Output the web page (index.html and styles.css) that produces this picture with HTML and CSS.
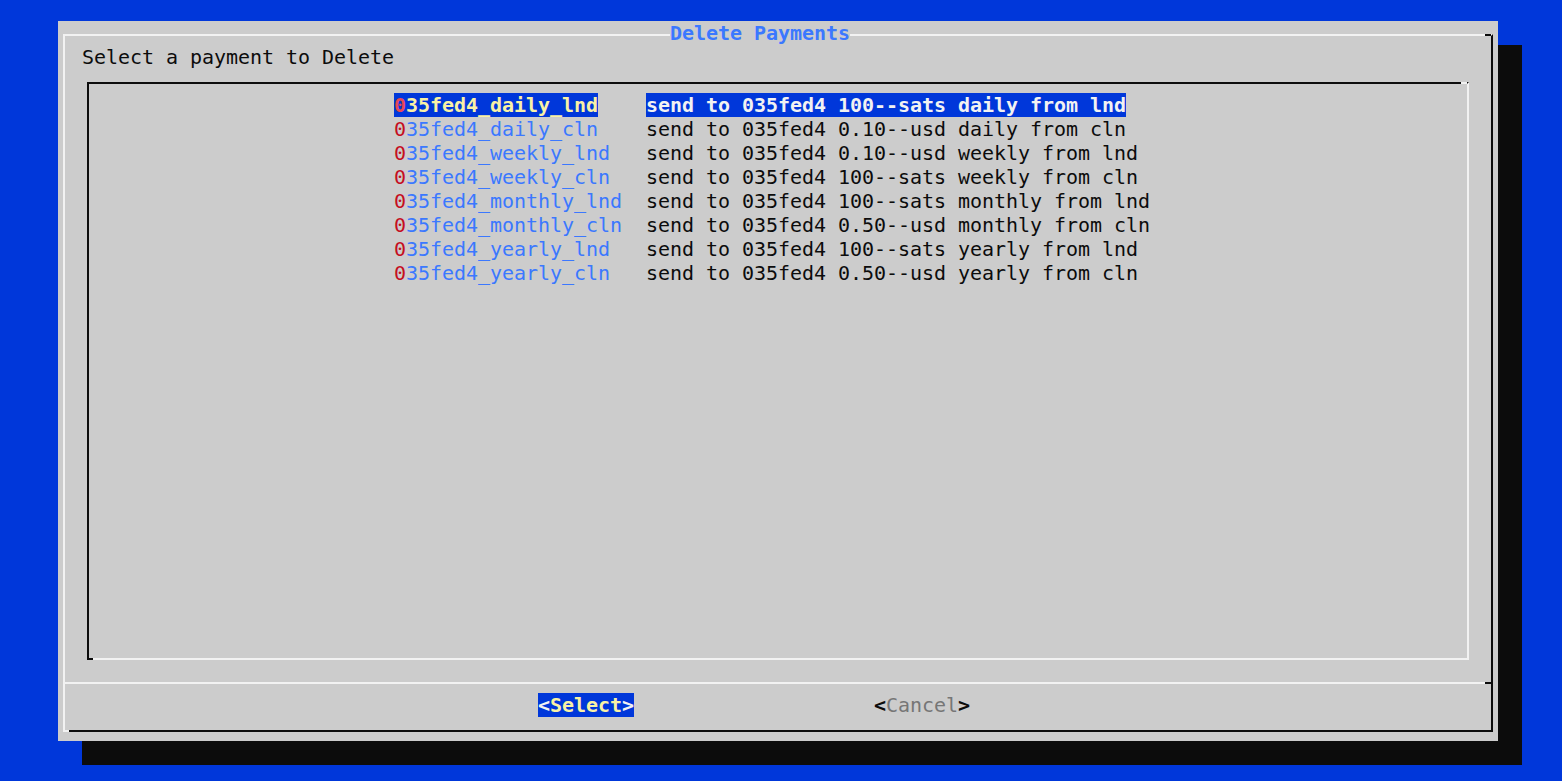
FILE: index.html
```html
<!DOCTYPE html>
<html>
<head>
<meta charset="utf-8">
<title>Delete Payments</title>
<link rel="stylesheet" href="styles.css">
</head>
<body>
<div class="dialog">
  <div class="frame">
    <div class="title">Delete Payments</div>
    <div class="prompt">Select a payment to Delete</div>
    <div class="listbox">
      <div class="row">
        <span class="tagcell"><span class="tag sel"><span class="hk">0</span>35fed4_daily_lnd</span></span>
        <span class="desc sel">send to 035fed4 100--sats daily from lnd</span>
      </div>
      <div class="row">
        <span class="tagcell"><span class="tag"><span class="hk">0</span>35fed4_daily_cln</span></span>
        <span class="desc">send to 035fed4 0.10--usd daily from cln</span>
      </div>
      <div class="row">
        <span class="tagcell"><span class="tag"><span class="hk">0</span>35fed4_weekly_lnd</span></span>
        <span class="desc">send to 035fed4 0.10--usd weekly from lnd</span>
      </div>
      <div class="row">
        <span class="tagcell"><span class="tag"><span class="hk">0</span>35fed4_weekly_cln</span></span>
        <span class="desc">send to 035fed4 100--sats weekly from cln</span>
      </div>
      <div class="row">
        <span class="tagcell"><span class="tag"><span class="hk">0</span>35fed4_monthly_lnd</span></span>
        <span class="desc">send to 035fed4 100--sats monthly from lnd</span>
      </div>
      <div class="row">
        <span class="tagcell"><span class="tag"><span class="hk">0</span>35fed4_monthly_cln</span></span>
        <span class="desc">send to 035fed4 0.50--usd monthly from cln</span>
      </div>
      <div class="row">
        <span class="tagcell"><span class="tag"><span class="hk">0</span>35fed4_yearly_lnd</span></span>
        <span class="desc">send to 035fed4 100--sats yearly from lnd</span>
      </div>
      <div class="row">
        <span class="tagcell"><span class="tag"><span class="hk">0</span>35fed4_yearly_cln</span></span>
        <span class="desc">send to 035fed4 0.50--usd yearly from cln</span>
      </div>
    </div>
    <div class="separator"></div>
    <div class="buttons">
      <span class="btn active"><span class="br">&lt;</span><span class="lbl">Select</span><span class="br">&gt;</span></span>
      <span class="btn"><span class="br">&lt;</span><span class="lbl">Cancel</span><span class="br">&gt;</span></span>
    </div>
  </div>
</div>
</body>
</html>
```

FILE: styles.css
```css
html, body {
  margin: 0;
  padding: 0;
}

body {
  background: #0037da;
  width: 1562px;
  height: 781px;
  overflow: hidden;
  font-family: "DejaVu Sans Mono", "Liberation Mono", monospace;
  font-size: 20px;
  letter-spacing: -0.04px;
  line-height: 24px;
  color: #0c0c0c;
}

.dialog {
  margin: 21px 0 0 58px;
  width: 1440px;
  height: 720px;
  box-sizing: border-box;
  padding: 13px 5px 9px 5px;
  background: #cccccc;
  box-shadow: 24px 24px 0 #0c0c0c;
  display: flex;
  flex-direction: column;
}

.frame {
  flex: 1;
  position: relative;
  display: flex;
  flex-direction: column;
  border-style: solid;
  border-width: 2px;
  border-color: #f2f2f2 #0c0c0c #0c0c0c #f2f2f2;
}

.frame::before {
  content: "";
  position: absolute;
  top: -2px;
  right: 0;
  width: 6px;
  height: 2px;
  background: #0c0c0c;
}

.frame::after {
  content: "";
  position: absolute;
  bottom: -2px;
  left: -2px;
  width: 6px;
  height: 2px;
  background: #f2f2f2;
}

.title {
  align-self: flex-start;
  margin: -15px 0 0 605px;
  height: 24px;
  background: #cccccc;
  color: #3b78ff;
  font-weight: bold;
  white-space: pre;
}

.prompt {
  margin-left: 17px;
  height: 24px;
  white-space: pre;
}

.listbox {
  position: relative;
  margin: 13px 0 0 22px;
  width: 1382px;
  height: 578px;
  box-sizing: border-box;
  padding: 9px 0 0 305px;
  border-style: solid;
  border-width: 2px;
  border-color: #0c0c0c #f2f2f2 #f2f2f2 #0c0c0c;
}

.listbox::before {
  content: "";
  position: absolute;
  top: -2px;
  right: 0;
  width: 6px;
  height: 2px;
  background: #f2f2f2;
}

.listbox::after {
  content: "";
  position: absolute;
  bottom: -2px;
  left: -2px;
  width: 6px;
  height: 2px;
  background: #0c0c0c;
}

.row {
  display: flex;
  height: 24px;
  white-space: pre;
}

.tagcell {
  width: 252px;
  flex: none;
}

.tag {
  color: #3b78ff;
}

.tag .hk {
  color: #c50f1f;
}

.tag.sel {
  background: #0037da;
  color: #f9f1a5;
  font-weight: bold;
}

.tag.sel .hk {
  color: #e74856;
}

.desc.sel {
  background: #0037da;
  color: #f2f2f2;
  font-weight: bold;
}

.separator {
  margin-top: 22px;
  height: 2px;
  background: linear-gradient(90deg, #f2f2f2 0, #f2f2f2 calc(100% - 6px), #0c0c0c calc(100% - 6px));
}

.buttons {
  margin-top: 9px;
  padding-left: 473px;
  display: flex;
  gap: 240px;
  height: 24px;
  white-space: pre;
}

.btn .br {
  color: #0c0c0c;
  font-weight: bold;
}

.btn .lbl {
  color: #767676;
}

.btn.active {
  background: #0037da;
}

.btn.active .br {
  color: #f2f2f2;
}

.btn.active .lbl {
  color: #f9f1a5;
  font-weight: bold;
}
```
